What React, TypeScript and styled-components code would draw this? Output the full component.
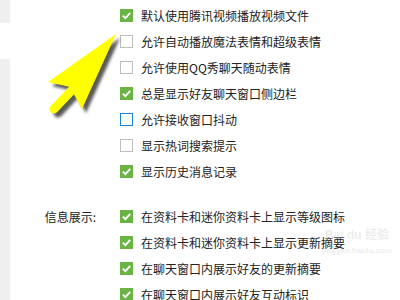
import React from "react";
import styled, { createGlobalStyle } from "styled-components";

const Global = createGlobalStyle`
  html, body { margin: 0; padding: 0; background: #fff; }
  body { font-family: "Noto Sans CJK SC", "Noto Sans", sans-serif; }
`;

const Page = styled.div`
  position: relative;
  display: flex;
  width: 400px;
  height: 300px;
  overflow: hidden;
  background: #fff;
`;

const Sidebar = styled.div`
  width: 10px;
  display: flex;
  flex-direction: column;
  gap: 36px;
  flex-shrink: 0;
`;

const SideBlock = styled.div<{ $h?: number }>`
  background: #efefef;
  ${(p) => (p.$h ? `height: ${p.$h}px;` : "flex: 1;")}
`;

const Content = styled.div`
  flex: 1;
  display: flex;
  flex-direction: column;
  gap: 19px;
  padding-top: 2.5px;
`;

const Section = styled.div`
  display: grid;
  grid-template-columns: 110px 1fr;
`;

const Label = styled.div`
  height: 26px;
  line-height: 26px;
  text-align: right;
  padding-right: 24px;
  font-size: 12px;
  color: #222;
  white-space: nowrap;
`;

const List = styled.div`
  display: flex;
  flex-direction: column;
`;

const Row = styled.div`
  height: 26px;
  display: flex;
  align-items: center;
  gap: 8px;
  font-size: 12px;
  color: #222;
  white-space: nowrap;
`;

const Box = styled.span<{ $state: "on" | "off" | "focus" }>`
  width: 13px;
  height: 13px;
  box-sizing: border-box;
  flex-shrink: 0;
  display: flex;
  align-items: center;
  justify-content: center;
  background: ${(p) => (p.$state === "on" ? "#6ab446" : "#fff")};
  border: 1px solid
    ${(p) =>
      p.$state === "on" ? "#6ab446" : p.$state === "focus" ? "#1a83e0" : "#bdbdbd"};
`;

const Arrow = styled.svg`
  position: absolute;
  left: 0;
  top: 0;
  pointer-events: none;
`;

const Watermark = styled.div`
  position: absolute;
  right: 8px;
  top: 228px;
  display: flex;
  flex-direction: column;
  align-items: center;
  gap: 4px;
  color: rgba(200, 200, 200, 0.35);
  font-family: "Liberation Sans", "Noto Sans CJK SC", sans-serif;
  pointer-events: none;
  white-space: nowrap;
`;

const WmTop = styled.div`
  font-size: 12px;
  font-weight: bold;
  line-height: 14px;
`;

const WmBottom = styled.div`
  font-size: 8px;
  font-weight: bold;
  line-height: 10px;
`;

type Item = { text: string; state: "on" | "off" | "focus" };

const group1: Item[] = [
  { text: "默认使用腾讯视频播放视频文件", state: "on" },
  { text: "允许自动播放魔法表情和超级表情", state: "off" },
  { text: "允许使用QQ秀聊天随动表情", state: "off" },
  { text: "总是显示好友聊天窗口侧边栏", state: "on" },
  { text: "允许接收窗口抖动", state: "focus" },
  { text: "显示热词搜索提示", state: "off" },
  { text: "显示历史消息记录", state: "on" },
];

const group2: Item[] = [
  { text: "在资料卡和迷你资料卡上显示等级图标", state: "on" },
  { text: "在资料卡和迷你资料卡上显示更新摘要", state: "on" },
  { text: "在聊天窗口内展示好友的更新摘要", state: "on" },
  { text: "在聊天窗口内展示好友互动标识", state: "on" },
];

function Check({ state }: { state: Item["state"] }) {
  return (
    <Box $state={state}>
      {state === "on" && (
        <svg width="11" height="11" viewBox="0 0 11 11">
          <path d="M1.8 5.6 L4.4 8.1 L9.2 2.8" fill="none" stroke="#fff" strokeWidth="1.9" />
        </svg>
      )}
    </Box>
  );
}

function Options({ items }: { items: Item[] }) {
  return (
    <List>
      {items.map((it) => (
        <Row key={it.text}>
          <Check state={it.state} />
          <span>{it.text}</span>
        </Row>
      ))}
    </List>
  );
}

export default function App() {
  return (
    <Page>
      <Global />
      <Sidebar>
        <SideBlock $h={23} />
        <SideBlock />
      </Sidebar>
      <Content>
        <Section>
          <div />
          <Options items={group1} />
        </Section>
        <Section>
          <Label>信息展示:</Label>
          <Options items={group2} />
        </Section>
      </Content>
      <Watermark>
        <WmTop>Bai du 经验</WmTop>
        <WmBottom>jingyan.baidu.com</WmBottom>
      </Watermark>
      <Arrow width="400" height="300" viewBox="0 0 400 300">
        <defs>
          <filter id="sh" x="-20%" y="-20%" width="140%" height="140%">
            <feGaussianBlur stdDeviation="1.6" />
          </filter>
        </defs>
        <g transform="translate(4 4)" filter="url(#sh)" opacity="0.75">
          <polygon points="116,34 48,82 70,87 82,109" fill="#222" />
          <line x1="73" y1="89" x2="54" y2="109" stroke="#222" strokeWidth="9" strokeLinecap="round" />
        </g>
        <polygon points="116,34 48,82 70,87 82,109" fill="#ffff00" />
        <line x1="73" y1="89" x2="54" y2="109" stroke="#ffff00" strokeWidth="9" strokeLinecap="round" />
      </Arrow>
    </Page>
  );
}
